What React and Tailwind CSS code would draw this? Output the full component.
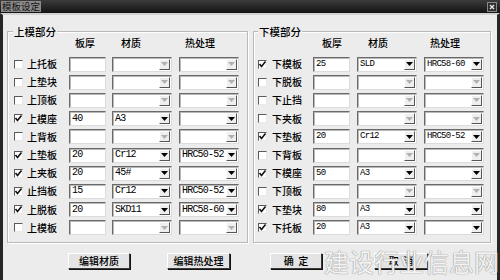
import React from "react";

const CJK = "font-['Noto_Sans_CJK_SC','Noto_Sans_CJK_JP',sans-serif]";
const MONO = "font-['Liberation_Mono',monospace]";

const leftRows = [
  ["上托板", false],
  ["上垫块", false],
  ["上顶板", false],
  ["上模座", true, "40", "A3", ""],
  ["上背板", false],
  ["上垫板", true, "20", "Cr12", "HRC50-52"],
  ["上夹板", true, "20", "45#", ""],
  ["止挡板", true, "15", "Cr12", "HRC50-52"],
  ["上脱板", true, "20", "SKD11", "HRC58-60"],
  ["上模板", false],
];

const rightRows = [
  ["下模板", true, "25", "SLD", "HRC58-60"],
  ["下脱板", false],
  ["下止挡", false],
  ["下夹板", false],
  ["下垫板", true, "20", "Cr12", "HRC50-52"],
  ["下背板", false],
  ["下模座", true, "50", "A3", ""],
  ["下顶板", false],
  ["下垫块", true, "80", "A3", ""],
  ["下托板", true, "20", "A3", ""],
];

function Check({ checked }) {
  return (
    <span className="relative block w-[9px] h-[9px] bg-white border border-t-[#5a5a5a] border-l-[#5a5a5a] border-r-[#e8e8e8] border-b-[#e8e8e8]">
      {checked && (
        <svg viewBox="0 0 9 9" className="absolute left-[-1px] top-[-1px] w-[9px] h-[9px]">
          <polyline points="1.5,4 3.5,6.5 7.5,1.5" fill="none" stroke="#111" strokeWidth="1.6" />
        </svg>
      )}
    </span>
  );
}

function Edit({ value, small }) {
  return (
    <div
      className={`w-[37px] h-[15px] bg-white border border-t-[#6a6a6a] border-l-[#6a6a6a] border-r-[#dcdcdc] border-b-[#dcdcdc] shadow-[inset_1px_1px_0_#b8b8b8] pl-[2px] flex items-center ${MONO} ${
        small ? "text-[9px] tracking-[-0.7px]" : "text-[10px] tracking-[-0.8px]"
      } text-black leading-none`}
    >
      {value}
    </div>
  );
}

function Combo({ value, enabled, small }) {
  return (
    <div className="w-[60px] h-[15px] bg-white border border-t-[#6a6a6a] border-l-[#6a6a6a] border-r-[#dcdcdc] border-b-[#dcdcdc] shadow-[inset_1px_1px_0_#b8b8b8] flex items-stretch">
      <div
        className={`flex-1 pl-[2px] flex items-center ${MONO} ${
          small ? "text-[9px] tracking-[-0.7px]" : "text-[10px] tracking-[-0.8px]"
        } text-black leading-none overflow-hidden whitespace-nowrap`}
      >
        {value}
      </div>
      <div className="w-[11px] my-[1px] mr-[1px] bg-[#efefef] border border-t-white border-l-white border-r-[#555] border-b-[#555] flex items-center justify-center">
        <svg viewBox="0 0 7 4" className="w-[7px] h-[4px]">
          <polygon points="0,0 7,0 3.5,4" fill={enabled ? "#000" : "#b0b0b0"} />
        </svg>
      </div>
    </div>
  );
}

function Group({ title, rows, cols, padLeft, labelLeft, heads, small, widthClass }) {
  return (
    <div className={`relative ${widthClass} h-[212px] border border-[#b9b9b9] shadow-[inset_1px_1px_0_#ffffff,1px_1px_0_#ffffff] pt-[5px] pb-[5px]`}>
      <div
        className={`absolute top-[-6px] ${labelLeft} px-[1px] bg-[#ececec] text-[10.5px] leading-[12px] font-medium text-black ${CJK}`}
      >
        {title}
      </div>
      <div className={`grid ${cols} ${padLeft} h-[12px] mb-[6px] text-[10px] leading-[12px] font-medium text-black ${CJK}`}>
        <div />
        <div />
        <div className={heads[0]}>板厚</div>
        <div className={heads[1]}>材质</div>
        <div className={heads[2]}>热处理</div>
      </div>
      <div className={`grid ${cols} ${padLeft} auto-rows-[18.2px] items-center`}>
        {rows.map(([name, on, t, m, h], i) => (
          <React.Fragment key={i}>
            <Check checked={on} />
            <div className={`text-[10px] leading-[12px] font-medium text-black ${CJK}`}>{name}</div>
            <Edit value={on ? t : ""} small={small} />
            <Combo value={on ? m : ""} enabled={on} small={small} />
            <Combo value={on ? h : ""} enabled={on} small={small} />
          </React.Fragment>
        ))}
      </div>
    </div>
  );
}

function Btn({ children, className }) {
  return (
    <div
      className={`h-[16px] bg-[#e4e4e4] border border-t-white border-l-white border-r-[#3a3a3a] border-b-[#3a3a3a] shadow-[1px_1px_0_#111] flex items-center justify-center text-[10px] leading-none font-medium text-black ${CJK} ${className}`}
    >
      {children}
    </div>
  );
}

export default function App() {
  return (
    <div className="relative w-[500px] h-[280px] overflow-hidden flex flex-col bg-[#ececec]">
      <div className="h-[13px] bg-linear-to-b from-[#3c3c3c] to-[#141414] flex items-center">
        <div className={`ml-[1px] px-[1px] h-[11px] bg-[#8a8a8a] text-[9.5px] leading-[11px] text-[#151515] ${CJK}`}>
          模板设定
        </div>
        <div className="ml-auto mr-[3px] w-[10px] h-[10px] bg-[#2e2e2e] border border-[#8a8a8a] flex items-center justify-center">
          <svg viewBox="0 0 6 6" className="w-[6px] h-[6px]">
            <path d="M1 1 L5 5 M5 1 L1 5" stroke="#e8e8e8" strokeWidth="1.4" />
          </svg>
        </div>
      </div>
      <div className="flex-1 border-t-2 border-t-[#d2d2d2] border-l-[3px] border-r-[3px] border-l-[#262626] border-r-[#262626] flex flex-col">
        <div className="flex mt-[16px] pl-[4px] gap-[5px]">
          <Group
            title="上模部分"
            rows={leftRows}
            cols="grid-cols-[13px_42px_43px_67px_60px]"
            padLeft="pl-[6px]"
            labelLeft="left-[5px]"
            heads={["pl-[6px]", "pl-[9px]", "pl-[6px]"]}
            widthClass="w-[241px]"
          />
          <Group
            title="下模部分"
            rows={rightRows}
            cols="grid-cols-[14px_41px_44px_67px_60px]"
            padLeft="pl-[4px]"
            labelLeft="left-[4px]"
            heads={["pl-[9px]", "pl-[11px]", "pl-[6px]"]}
            small
            widthClass="w-[238px]"
          />
        </div>
        <div className="flex mt-[10px]">
          <Btn className="ml-[65px] w-[62px]">编辑材质</Btn>
          <Btn className="ml-[37px] w-[63px]">编辑热处理</Btn>
          <Btn className="ml-[40px] w-[52px]">确&nbsp;&nbsp;定</Btn>
          <Btn className="ml-[52px] w-[54px]">取&nbsp;&nbsp;消</Btn>
        </div>
      </div>
      <div
        className={`absolute left-[324px] top-[246px] text-[25px] leading-[30px] text-white/90 ${CJK} [text-shadow:0_0_1px_#888,0_0_1px_#888]`}
      >
        建设行业信息网
      </div>
    </div>
  );
}
